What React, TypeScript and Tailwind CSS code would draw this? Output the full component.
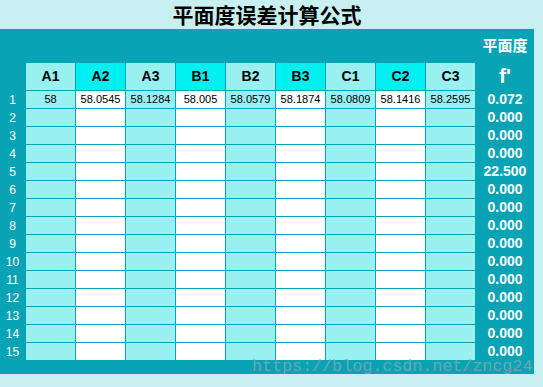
const cols = ['A1', 'A2', 'A3', 'B1', 'B2', 'B3', 'C1', 'C2', 'C3'];
const firstRow = ['58', '58.0545', '58.1284', '58.005', '58.0579', '58.1874', '58.0809', '58.1416', '58.2595'];
const results = ['0.072', '0.000', '0.000', '0.000', '22.500', '0.000', '0.000', '0.000', '0.000', '0.000', '0.000', '0.000', '0.000', '0.000', '0.000'];

export default function App() {
  const rows = Array.from({ length: 15 }, (_, i) => i);

  return (
    <div className="w-[543px] h-[387px] bg-[#c8f0f0] font-['Liberation_Sans',Arial,sans-serif] overflow-hidden">
      <div className="w-[534px] h-[29px] flex items-center justify-center">
        <h1 className="text-[21px] leading-none font-bold text-black font-['Noto_Sans_CJK_SC',sans-serif]">
          平面度误差计算公式
        </h1>
      </div>

      <div className="relative w-[534px] h-[345px] bg-[#08a4b6]">
        <div className="grid grid-cols-[25px_repeat(9,49px)_58px] grid-rows-[33px_27px_repeat(15,17px)] gap-px">
          {/* top label row */}
          <div className="col-span-10" />
          <div className="flex items-center justify-center text-white text-[15px] font-bold font-['Noto_Sans_CJK_SC',sans-serif]">
            平面度
          </div>

          {/* header row */}
          <div />
          {cols.map((c, i) => (
            <div
              key={c}
              className={`flex items-center justify-center text-[14px] font-bold text-black ${
                i % 2 === 1 ? 'bg-[#00f0f2]' : 'bg-[#98f0f0]'
              }`}
            >
              {c}
            </div>
          ))}
          <div className="flex items-center justify-center text-white text-[21px] font-bold pb-[2px]">f'</div>

          {/* data rows */}
          {rows.map((r) => (
            <div key={r} className="contents">
              <div className="flex items-center justify-center text-white text-[12px]">{r + 1}</div>
              {cols.map((c, i) => (
                <div
                  key={c}
                  className={`flex items-center justify-center text-[11px] text-black ${
                    i % 2 === 1 ? 'bg-white' : 'bg-[#98f0f0]'
                  }`}
                >
                  {r === 0 ? firstRow[i] : ''}
                </div>
              ))}
              <div className="flex items-center justify-center text-white text-[14px] font-bold">{results[r]}</div>
            </div>
          ))}
        </div>

        {/* watermark in the bottom strip */}
        <span className="absolute left-[252px] top-[330px] text-[16.7px] leading-none text-[#9aa8a8]/70 font-['Liberation_Mono',monospace] whitespace-nowrap pointer-events-none">
          https://blog.csdn.net/zncg24
        </span>
      </div>
    </div>
  );
}
